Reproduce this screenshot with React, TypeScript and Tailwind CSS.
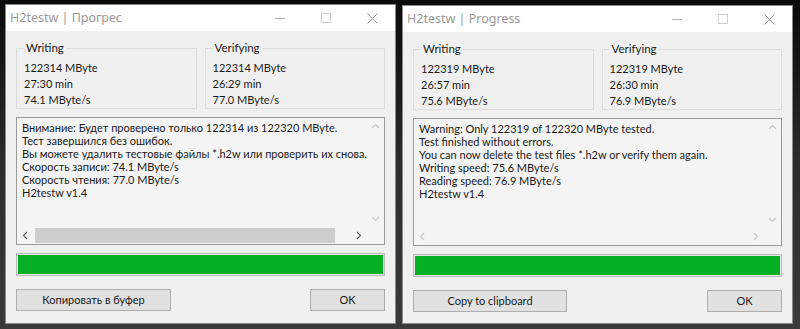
import React from "react";

const font = { fontFamily: 'Lato, "Noto Sans", "Liberation Sans", sans-serif' };
const titleFont = { fontFamily: '"Noto Sans", "Liberation Sans", sans-serif' };

function TitleBar({ title }: { title: string }) {
  return (
    <div className="flex h-[26px] items-center bg-white pl-[4px]">
      <span className="flex-1 text-[12.5px] text-[#9a9a9a]" style={titleFont}>
        {title}
      </span>
      <div className="flex h-full items-center">
        <div className="flex w-[46px] justify-center">
          <div className="h-px w-[10px] bg-[#b5b5b5]" />
        </div>
        <div className="flex w-[46px] justify-center">
          <div className="h-[10px] w-[10px] border border-[#d0d0d0]" />
        </div>
        <div className="flex w-[46px] justify-center">
          <svg width="11" height="11" viewBox="0 0 11 11">
            <path d="M0.5 0.5 L10.5 10.5 M10.5 0.5 L0.5 10.5" stroke="#9a9a9a" strokeWidth="1" />
          </svg>
        </div>
      </div>
    </div>
  );
}

function Group({ label, lines }: { label: string; lines: string[] }) {
  return (
    <fieldset className="h-[68px] flex-1 border border-[#dcdcdc] px-[7px] pb-0">
      <legend className="px-[2px] text-[11.5px] leading-[14px] text-[#1a1a1a]">{label}</legend>
      <div className="mt-[5px] flex flex-col text-[11px] leading-[16px] text-[#1a1a1a]">
        {lines.map((l) => (
          <div key={l}>{l}</div>
        ))}
      </div>
    </fieldset>
  );
}

function Chevron({ dir, color }: { dir: "up" | "down" | "left" | "right"; color: string }) {
  const paths: Record<string, string> = {
    up: "M1 6 L4.5 2.5 L8 6",
    down: "M1 3 L4.5 6.5 L8 3",
    left: "M6 1 L2.5 4.5 L6 8",
    right: "M3 1 L6.5 4.5 L3 8",
  };
  return (
    <svg width="9" height="9" viewBox="0 0 9 9">
      <path d={paths[dir]} stroke={color} strokeWidth="1.2" fill="none" />
    </svg>
  );
}

function TextArea({ lines, hThumb }: { lines: string[]; hThumb: boolean }) {
  const arrowV = "#c8c8c8";
  const arrowH = hThumb ? "#606060" : "#c8c8c8";
  return (
    <div className="flex h-[128px] flex-col border border-[#9a9a9a] bg-[#f4f4f4]">
      <div className="flex min-h-0 flex-1">
        <div className="flex-1 overflow-hidden whitespace-nowrap pl-[5px] pt-[3px] text-[11px] leading-[13px] text-[#1a1a1a]">
          {lines.map((l) => (
            <div key={l}>{l}</div>
          ))}
        </div>
        <div className="flex w-[17px] flex-col items-center justify-between bg-[#f4f4f4] py-[4px]">
          <Chevron dir="up" color={arrowV} />
          <Chevron dir="down" color={arrowV} />
        </div>
      </div>
      <div className="flex h-[17px] items-center">
        <div className="flex w-[17px] justify-center">
          <Chevron dir="left" color={arrowH} />
        </div>
        <div className="flex flex-1 items-center px-[1px]">
          {hThumb && <div className="h-[15px] w-[300px] bg-[#cdcdcd]" />}
        </div>
        <div className="flex w-[17px] justify-center">
          <Chevron dir="right" color={arrowH} />
        </div>
        <div className="w-[17px]" />
      </div>
    </div>
  );
}

function Button({ label, w }: { label: string; w: string }) {
  return (
    <div
      className={`${w} flex h-[22px] items-center justify-center border border-[#adadad] bg-[#e1e1e1] text-[11px] text-[#1a1a1a]`}
    >
      {label}
    </div>
  );
}

function Window({
  title,
  write,
  verify,
  lines,
  copy,
  hThumb,
  copyW,
  className,
}: {
  title: string;
  write: string[];
  verify: string[];
  lines: string[];
  copy: string;
  hThumb: boolean;
  copyW: string;
  className: string;
}) {
  return (
    <div className={`${className} flex flex-col border border-[#8a8a8a] bg-[#f0f0f0]`} style={font}>
      <TitleBar title={title} />
      <div className="flex flex-1 flex-col px-[10px] pt-[10px]">
        <div className="flex gap-[8px]">
          <Group label="Writing" lines={write} />
          <Group label="Verifying" lines={verify} />
        </div>
        <div className="mt-[8px]">
          <TextArea lines={lines} hThumb={hThumb} />
        </div>
        <div className="mt-[8px] h-[23px] border border-[#bcbcbc] bg-[#e6e6e6] p-px">
          <div className="h-full w-full bg-[#06b025]" />
        </div>
        <div className="mt-[13px] flex justify-between">
          <Button label={copy} w={copyW} />
          <Button label="OK" w="w-[75px]" />
        </div>
      </div>
    </div>
  );
}

export default function App() {
  return (
    <div className="flex h-[329px] w-[800px] overflow-hidden bg-[#2b2b2b]">
      <div className="flex h-full w-full bg-gradient-to-b from-[#0a0a0a] via-[#2c2c2c] to-[#3a3a3a]">
        <Window
          className="ml-[5px] mt-[4px] h-[320px] w-[391px]"
          title="H2testw | Прогрес"
          write={["122314 MByte", "27:30 min", "74.1 MByte/s"]}
          verify={["122314 MByte", "26:29 min", "77.0 MByte/s"]}
          lines={[
            "Внимание: Будет проверено только 122314 из 122320 MByte.",
            "Тест завершился без ошибок.",
            "Вы можете удалить тестовые файлы *.h2w или проверить их снова.",
            "Скорость записи: 74.1 MByte/s",
            "Скорость чтения: 77.0 MByte/s",
            "H2testw v1.4",
          ]}
          copy="Копировать в буфер"
          copyW="w-[155px]"
          hThumb={true}
        />
        <Window
          className="ml-[6px] mt-[5px] h-[319px] w-[391px]"
          title="H2testw | Progress"
          write={["122319 MByte", "26:57 min", "75.6 MByte/s"]}
          verify={["122319 MByte", "26:30 min", "76.9 MByte/s"]}
          lines={[
            "Warning: Only 122319 of 122320 MByte tested.",
            "Test finished without errors.",
            "You can now delete the test files *.h2w or verify them again.",
            "Writing speed: 75.6 MByte/s",
            "Reading speed: 76.9 MByte/s",
            "H2testw v1.4",
          ]}
          copy="Copy to clipboard"
          copyW="w-[154px]"
          hThumb={false}
        />
      </div>
    </div>
  );
}
